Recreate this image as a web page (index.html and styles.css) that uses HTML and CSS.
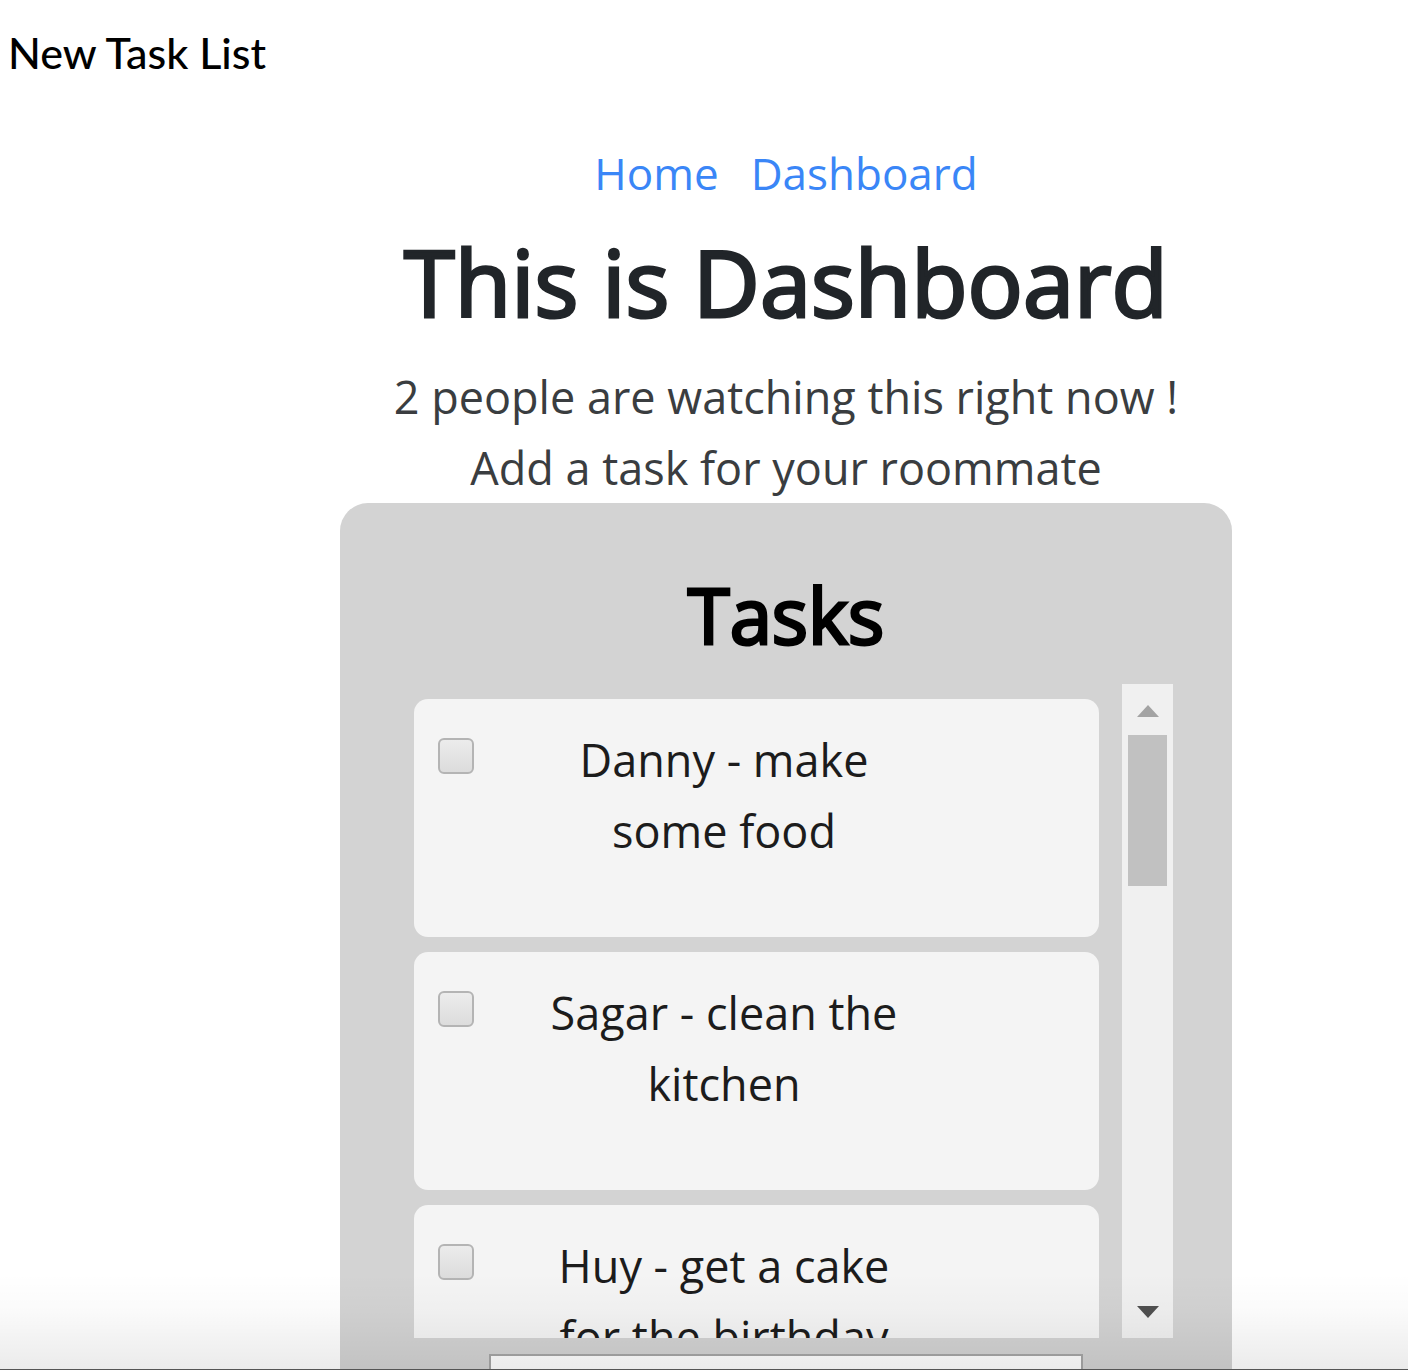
FILE: index.html
```html
<!DOCTYPE html>
<html lang="en">
<head>
<meta charset="utf-8">
<meta name="viewport" content="width=device-width, initial-scale=1">
<title>New Task List</title>
<link rel="stylesheet" href="styles.css">
</head>
<body>
<div class="page">
  <header class="caption">New Task List</header>
  <main class="dashboard">
    <nav class="links">
      <a href="#home">Home</a>
      <a href="#dashboard">Dashboard</a>
    </nav>
    <h1 class="title">This is Dashboard</h1>
    <p class="line">2 people are watching this right now !</p>
    <p class="line">Add a task for your roommate</p>
    <section class="panel">
      <h2 class="panel-title">Tasks</h2>
      <div class="scroller">
        <ul class="tasks">
          <li class="task"><input class="check" type="checkbox" id="t1"><label class="name" for="t1">Danny - make some food</label></li>
          <li class="task"><input class="check" type="checkbox" id="t2"><label class="name" for="t2">Sagar - clean the kitchen</label></li>
          <li class="task"><input class="check" type="checkbox" id="t3"><label class="name" for="t3">Huy - get a cake for the birthday</label></li>
        </ul>
        <div class="bar" aria-hidden="true">
          <svg class="arrow" viewBox="0 0 51 51"><path d="M15 33 26 21 37 33z" fill="#a3a3a3"/></svg>
          <div class="thumb"></div>
          <svg class="arrow arrow-down" viewBox="0 0 51 51"><path d="M15 19 37 19 26 31z" fill="#505050"/></svg>
        </div>
      </div>
      <input class="entry" type="text" aria-label="New task">
    </section>
  </main>
</div>
</body>
</html>
```
FILE: styles.css
```css
* { box-sizing: border-box; }

body {
  margin: 0;
  background: #fff;
  color: #3a3d40;
  font-family: "Open Sans", "Noto Sans", sans-serif;
  font-size: 45px;
  line-height: 71px;
}

.page {
  position: relative;
  height: 100vh;
  overflow: hidden;
  border-bottom: 1px solid #555;
}

/* shade that fades in towards the bottom edge */
.page::after {
  content: "";
  position: absolute;
  inset: auto 0 0;
  height: 96px;
  background: linear-gradient(rgba(0, 0, 0, 0), rgba(0, 0, 0, 0.02) 40%, rgba(0, 0, 0, 0.08));
  pointer-events: none;
}

.caption {
  padding: 23px 8px 0;
  color: #000;
  font-family: Lato, "Open Sans", sans-serif;
  font-size: 43px;
  font-weight: 500;
  line-height: 60px;
}

.dashboard {
  padding: 55px 0 0 164px;
  text-align: center;
}

.links {
  display: flex;
  justify-content: center;
  gap: 32px;
  font-size: 44px;
}

.links a {
  color: #3a86f7;
  text-decoration: none;
}

.title, .panel-title, .line { margin: 0; }

/* a thin stroke gives the headings a weight between regular and semibold */
.title, .panel-title {
  font-weight: 400;
  -webkit-text-stroke: 3px currentColor;
}

.title {
  padding: 15px 0 21px;
  color: #212529;
  font-size: 92px;
  line-height: 116px;
}

.line { line-height: 71px; }

.panel {
  max-width: 892px;
  margin: 0 auto;
  padding: 62px 59px 60px 74px;
  border-radius: 28px;
  background: #d3d3d3;
}

.panel-title {
  padding: 0 15px 19px 0;
  color: #000;
  font-size: 76px;
  line-height: 100px;
}

.scroller {
  display: flex;
  gap: 23px;
  height: 654px;
}

.tasks {
  flex: 1;
  margin: 0;
  padding: 15px 0 0;
  overflow: hidden;
  list-style: none;
}

.task {
  display: flex;
  align-items: flex-start;
  gap: 60px;
  min-height: 238px;
  margin-bottom: 15px;
  padding: 25px 24px;
  border-radius: 14px;
  background: #f4f4f4;
  color: #1c1c1c;
}

.check {
  appearance: none;
  width: 36px;
  height: 36px;
  margin: 14px 0 0;
  border: 2px solid #b4b4b4;
  border-radius: 6px;
  background: linear-gradient(#ececec, #dcdcdc);
}

.check:checked { background: #3a86f7; }

.name { width: 380px; }

.bar {
  display: flex;
  flex-direction: column;
  align-items: center;
  width: 51px;
  background: #f0f0f0;
}

.arrow { width: 51px; height: 51px; }

.arrow-down { margin-top: auto; }

.thumb {
  width: 39px;
  height: 151px;
  background: #c1c1c1;
}

.entry {
  display: block;
  width: 594px;
  max-width: 100%;
  height: 80px;
  margin: 16px auto 0 75px;
  border: 2px solid #a6a6a6;
  background: #fff;
  font: inherit;
}
```
